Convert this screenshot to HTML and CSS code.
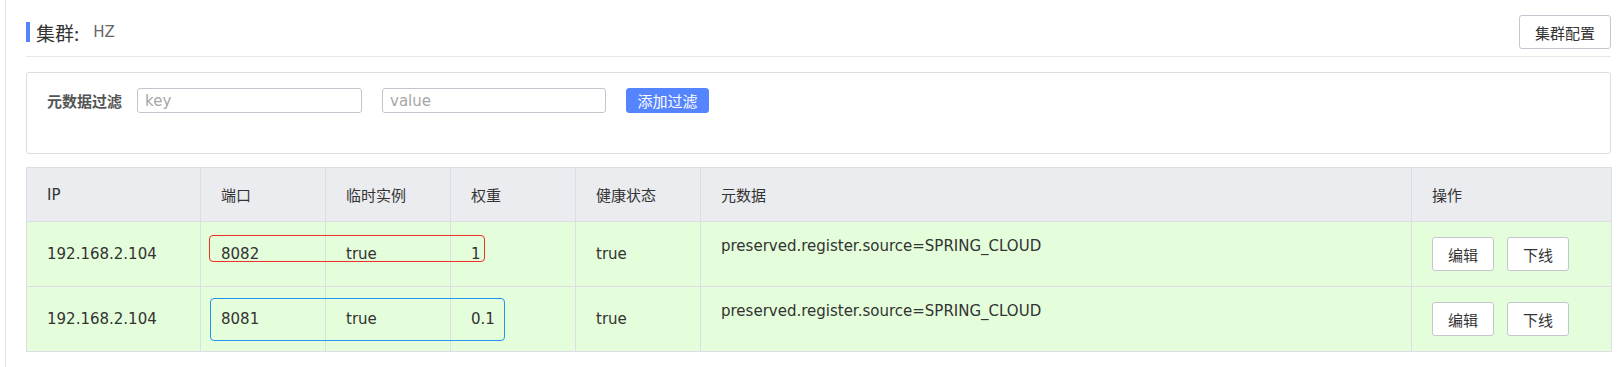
FILE: index.html
```html
<!DOCTYPE html>
<html lang="zh-CN">
<head>
<meta charset="utf-8">
<title>集群: HZ</title>
<link rel="stylesheet" href="styles.css">
</head>
<body>
<div class="app">
  <div class="head">
    <div class="title"><span class="title-bar"></span><span class="title-text">集群:</span><span class="title-name">HZ</span></div>
    <button class="btn btn-normal btn-config">集群配置</button>
  </div>
  <div class="divider"></div>
  <div class="filter">
    <span class="filter-label">元数据过滤</span>
    <input class="input" placeholder="key">
    <input class="input input-value" placeholder="value">
    <button class="btn btn-primary btn-add">添加过滤</button>
  </div>
  <div class="table-wrap">
    <table class="table">
      <colgroup>
        <col class="c-ip"><col class="c-mid"><col class="c-mid"><col class="c-mid"><col class="c-mid"><col class="c-meta"><col class="c-op">
      </colgroup>
      <thead>
        <tr><th>IP</th><th>端口</th><th>临时实例</th><th>权重</th><th>健康状态</th><th>元数据</th><th>操作</th></tr>
      </thead>
      <tbody>
        <tr>
          <td>192.168.2.104</td><td>8082</td><td>true</td><td>1</td><td>true</td>
          <td class="meta">preserved.register.source=SPRING_CLOUD</td>
          <td><div class="ops"><button class="btn btn-normal btn-op">编辑</button><button class="btn btn-normal btn-op">下线</button></div></td>
        </tr>
        <tr>
          <td>192.168.2.104</td><td>8081</td><td>true</td><td>0.1</td><td>true</td>
          <td class="meta">preserved.register.source=SPRING_CLOUD</td>
          <td><div class="ops"><button class="btn btn-normal btn-op">编辑</button><button class="btn btn-normal btn-op">下线</button></div></td>
        </tr>
      </tbody>
    </table>
    <div class="mark mark-red"></div>
    <div class="mark mark-blue"></div>
  </div>
</div>
</body>
</html>
```

FILE: styles.css
```css
* { box-sizing: border-box; }
html, body { margin: 0; padding: 0; background: #fff; }
body {
  font-family: "DejaVu Sans", "Noto Sans CJK SC", sans-serif;
  font-size: 15px;
  color: #333;
}
.app {
  margin-left: 5px;
  border-left: 1px solid #e3e3e3;
  min-height: 100vh;
  padding: 15px 12px 0 20px;
}
.head {
  display: flex;
  align-items: center;
  justify-content: space-between;
  height: 34px;
}
.title { display: flex; align-items: center; }
.title-bar {
  width: 4px;
  height: 20px;
  background: #5584ff;
  margin-right: 6px;
}
.title-text {
  font-size: 19px;
  color: #333;
  font-family: "Noto Sans CJK SC", "DejaVu Sans", sans-serif;
}
.title-name {
  margin-left: 14px;
  font-size: 15px;
  color: #666;
}
.btn {
  font-family: "Noto Sans CJK SC", "DejaVu Sans", sans-serif;
  font-size: 15px;
  border-radius: 3px;
  cursor: pointer;
  padding: 0;
  line-height: 1;
}
.btn-normal {
  background: #fff;
  border: 1px solid #c4c6cf;
  color: #333;
}
.btn-primary {
  background: #5584ff;
  border: 1px solid #5584ff;
  color: #fff;
}
.btn-config { width: 92px; height: 34px; }
.divider {
  margin-top: 7px;
  border-top: 1px solid #e6e7eb;
}
.filter {
  margin-top: 15px;
  border: 1px solid #dcdee3;
  border-radius: 3px;
  height: 82px;
  padding: 15px 20px 0 20px;
  display: flex;
  align-items: flex-start;
}
.filter-label {
  font-family: "Noto Sans CJK SC", sans-serif;
  font-weight: bold;
  font-size: 15px;
  color: #555;
  line-height: 25px;
  margin-right: 15px;
}
.input {
  width: 225px;
  height: 25px;
  border: 1px solid #c4c6cf;
  border-radius: 3px;
  padding: 0 7px;
  font-family: "DejaVu Sans", sans-serif;
  font-size: 15px;
  color: #333;
  outline: none;
}
.input::placeholder { color: #a6a6a6; }
.input-value { margin-left: 20px; width: 224px; }
.btn-add { margin-left: 20px; width: 83px; height: 25px; }
.table-wrap {
  position: relative;
  margin-top: 13px;
}
.table {
  width: 100%;
  border-collapse: collapse;
  table-layout: fixed;
  border: 1px solid #dcdee3;
}
.c-ip { width: 174px; }
.c-mid { width: 125px; }
.c-meta { width: 711px; }
.c-op { width: 200px; }
.table th {
  background: #ebecf0;
  font-weight: normal;
  text-align: left;
  height: 54px;
  padding: 0 20px;
  border: 1px solid #dcdee3;
  color: #333;
}
.table td {
  background: #e4fdda;
  height: 65px;
  padding: 0 20px;
  border: 1px solid #dcdee3;
  vertical-align: middle;
  color: #333;
}
.table td.meta {
  vertical-align: top;
  padding-top: 15px;
}
.ops { display: flex; gap: 13px; }
.btn-op { width: 62px; height: 34px; }
.mark {
  position: absolute;
  border: 1px solid;
  border-radius: 4px;
  pointer-events: none;
}
.mark-red {
  border-color: #e8322a;
  left: 183px;
  top: 68px;
  width: 276px;
  height: 27px;
}
.mark-blue {
  border-color: #2496f0;
  left: 184px;
  top: 131px;
  width: 295px;
  height: 43px;
}
```
